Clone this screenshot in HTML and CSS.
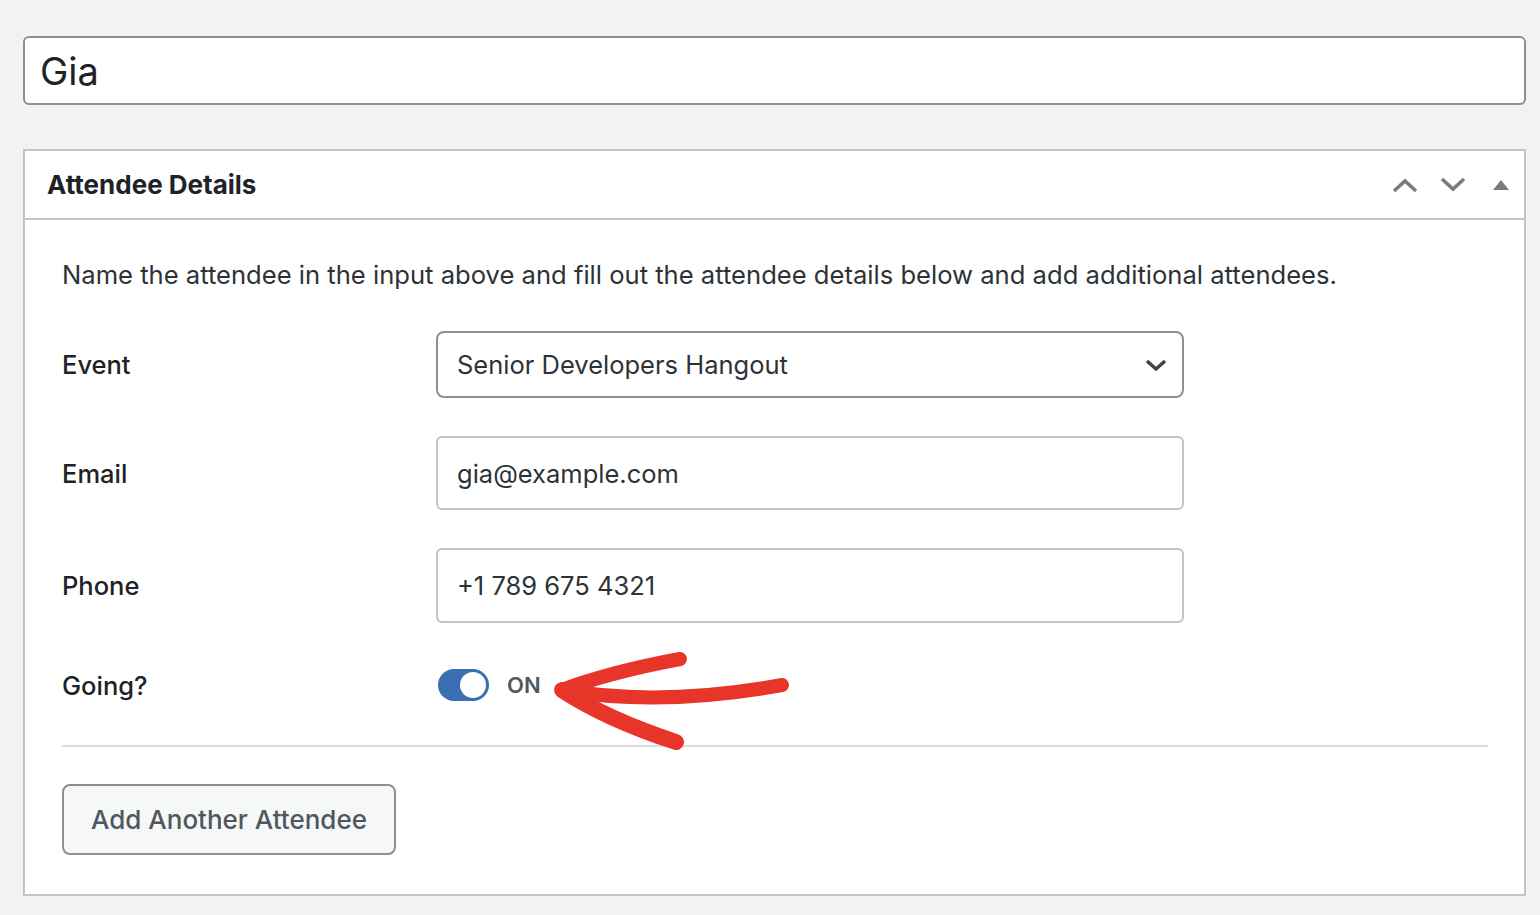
FILE: index.html
```html
<!DOCTYPE html>
<html lang="en">
<head>
  <meta charset="UTF-8">
  <title>Edit Attendee</title>
  <link rel="stylesheet" href="styles.css">
</head>
<body>

  <div class="title-wrap">
    <input class="title-input" type="text" value="Gia">
  </div>

  <div class="postbox">
    <div class="postbox-header">
      <h2>Attendee Details</h2>
      <div class="handle-actions">
        <button class="handle" aria-label="Move up">
          <svg width="28" height="18" viewBox="0 0 28 18"><path d="M3 15 L14 5 L25 15" fill="none" stroke="#787c82" stroke-width="3.6"/></svg>
        </button>
        <button class="handle" aria-label="Move down">
          <svg width="28" height="18" viewBox="0 0 28 18"><path d="M3 3 L14 13 L25 3" fill="none" stroke="#787c82" stroke-width="3.6"/></svg>
        </button>
        <button class="handle" aria-label="Toggle panel">
          <svg width="28" height="12" viewBox="0 0 28 12"><path d="M6 11 L14 1 L22 11 Z" fill="#787c82"/></svg>
        </button>
      </div>
    </div>

    <div class="inside">
      <p class="description">Name the attendee in the input above and fill out the attendee details below and add additional attendees.</p>

      <div class="form-row">
        <label>Event</label>
        <div class="select">
          <span>Senior Developers Hangout</span>
          <svg width="24" height="16" viewBox="0 0 24 16"><path d="M3 4 L12 12 L21 4" fill="none" stroke="#3c434a" stroke-width="3.4"/></svg>
        </div>
      </div>

      <div class="form-row">
        <label>Email</label>
        <input class="text-input" type="text" value="gia@example.com">
      </div>

      <div class="form-row">
        <label>Phone</label>
        <input class="text-input phone" type="text" value="+1 789 675 4321">
      </div>

      <div class="form-row toggle-row">
        <label>Going?</label>
        <div class="toggle">
          <span class="track"><span class="knob"></span></span>
          <span class="toggle-label">ON</span>
        </div>
      </div>

      <hr>

      <button class="add-button">Add Another Attendee</button>
    </div>
  </div>

  <!-- hand drawn annotation arrow -->
  <svg class="annotation" width="250" height="110" viewBox="0 0 250 110">
    <g fill="none" stroke="#e8352a" stroke-linecap="round">
      <path d="M14 43 Q 112 60 234 38" stroke-width="14"/>
      <path d="M14 43 Q 62 25 132 12" stroke-width="14"/>
      <path d="M14 43 Q 58 72 128 95" stroke-width="16"/>
    </g>
  </svg>

</body>
</html>
```

FILE: styles.css
```css
body {
  font-family: Inter, "Noto Sans", sans-serif;
  background-color: #f1f2f4;
  color: #1d2327;
  margin: 0;
  padding: 36px 14px 20px 23px;
}

.title-wrap {
  margin-bottom: 44px;
}

.title-input {
  box-sizing: border-box;
  width: 100%;
  height: 69px;
  padding: 0 15px;
  font-family: inherit;
  font-size: 38px;
  color: #1d2327;
  background: #fff;
  border: 2px solid #8c8f94;
  border-radius: 6px;
  outline: none;
}

.postbox {
  background: #fff;
  border: 2px solid #c3c4c7;
}

.postbox-header {
  display: flex;
  align-items: center;
  justify-content: space-between;
  height: 67px;
  padding: 0 9px 0 22px;
  border-bottom: 2px solid #c3c4c7;
}

.postbox-header h2 {
  margin: 0;
  font-size: 26px;
  font-weight: 700;
  color: #1d2327;
}

.handle-actions {
  display: flex;
  align-items: center;
  gap: 20px;
}

.handle {
  display: flex;
  align-items: center;
  justify-content: center;
  background: transparent;
  border: none;
  padding: 0;
  cursor: pointer;
}

.inside {
  padding: 37px 36px 39px 37px;
}

.description {
  margin: 0 0 38px;
  font-size: 25.6px;
  line-height: 36px;
  color: #2c3338;
}

.form-row {
  display: flex;
  align-items: center;
  margin-bottom: 38px;
}

.form-row label {
  width: 374px;
  flex-shrink: 0;
  font-size: 25.5px;
  font-weight: 500;
  color: #1d2327;
}

.select {
  box-sizing: border-box;
  width: 748px;
  height: 67px;
  display: flex;
  align-items: center;
  justify-content: space-between;
  padding: 0 14px 0 19px;
  font-size: 25.5px;
  color: #2c3338;
  border: 2px solid #8c8f94;
  border-radius: 8px;
}

.text-input {
  box-sizing: border-box;
  width: 748px;
  height: 74px;
  padding: 0 19px;
  font-family: inherit;
  font-size: 25.5px;
  color: #2c3338;
  border: 2px solid #c3c4c7;
  border-radius: 6px;
  outline: none;
}

.text-input.phone {
  height: 75px;
}

.toggle-row {
  margin-top: 46px;
  margin-bottom: 44px;
}

.toggle {
  display: flex;
  align-items: center;
  gap: 18px;
  padding-left: 2px;
}

.track {
  box-sizing: border-box;
  width: 51px;
  height: 32px;
  padding: 3px;
  display: flex;
  justify-content: flex-end;
  background: #3b6fb3;
  border-radius: 16px;
}

.knob {
  width: 26px;
  height: 26px;
  background: #fff;
  border-radius: 50%;
}

.toggle-label {
  font-size: 22px;
  font-weight: 600;
  color: #50575e;
}

hr {
  margin: 0 0 37px;
  border: none;
  border-top: 2px solid #dcdcde;
}

.add-button {
  box-sizing: border-box;
  width: 334px;
  height: 71px;
  font-family: inherit;
  font-size: 26px;
  font-weight: 500;
  color: #50575e;
  background: #f6f7f7;
  border: 2px solid #8c8f94;
  border-radius: 8px;
  cursor: pointer;
}

.annotation {
  position: absolute;
  left: 548px;
  top: 647px;
}
```
